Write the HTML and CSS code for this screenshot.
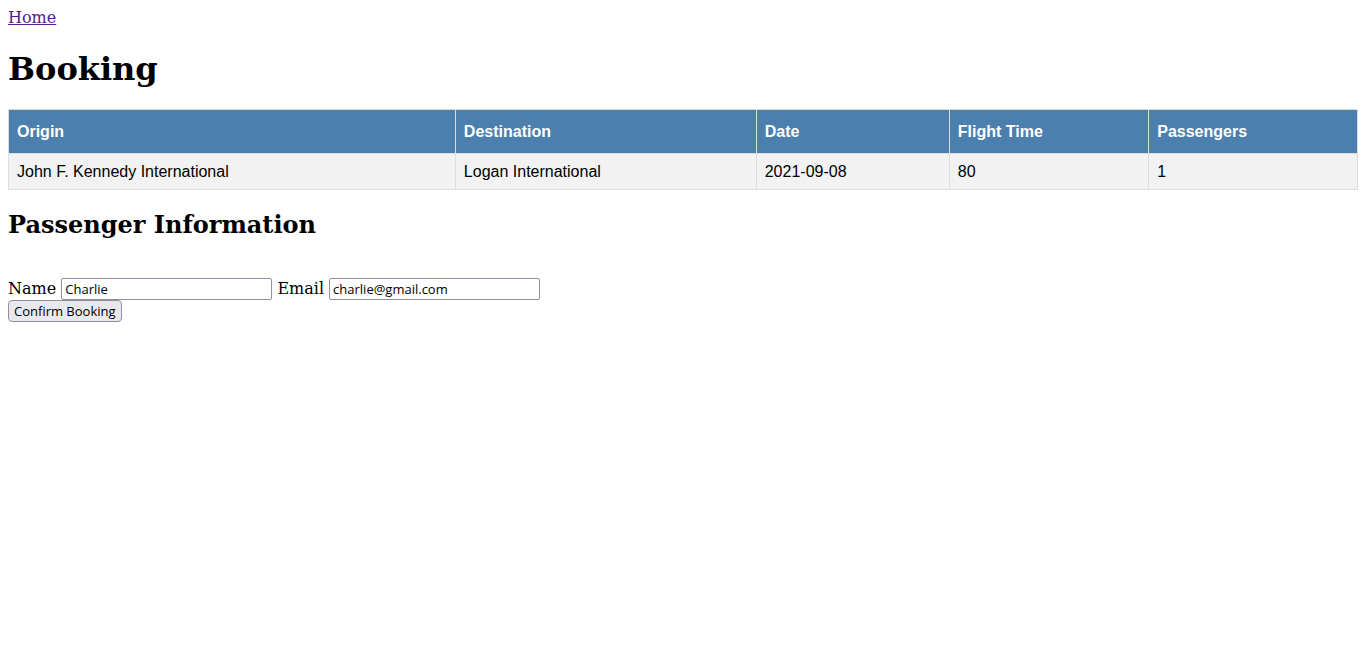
FILE: index.html
```html
<!DOCTYPE html>
<html>
<head>
<meta charset="utf-8">
<title>Booking</title>
<link rel="stylesheet" href="styles.css">
</head>
<body>
<a href="#">Home</a>
<h1>Booking</h1>
<table class="flights">
  <thead>
    <tr>
      <th>Origin</th>
      <th>Destination</th>
      <th>Date</th>
      <th>Flight Time</th>
      <th>Passengers</th>
    </tr>
  </thead>
  <tbody>
    <tr>
      <td>John F. Kennedy International</td>
      <td>Logan International</td>
      <td>2021-09-08</td>
      <td>80</td>
      <td>1</td>
    </tr>
  </tbody>
</table>
<h2>Passenger Information</h2>
<form class="passenger-form">
  <br>
  <label>Name</label> <input class="field" type="text" value="Charlie">
  <label>Email</label> <input class="field" type="text" value="charlie@gmail.com">
  <br>
  <button class="confirm" type="button">Confirm Booking</button>
</form>
</body>
</html>
```
FILE: styles.css
```css
body {
  font-family: "DejaVu Serif", serif;
}

a {
  color: #551a8b;
}

h1 {
  line-height: 38px;
  margin-top: 22.5px;
}

.flights {
  width: 100%;
  border-collapse: collapse;
  font-family: "Liberation Sans", Arial, sans-serif;
}

.flights th,
.flights td {
  border: 1px solid #ddd;
  padding: 8px;
  text-align: left;
  line-height: 19px;
}

.flights th {
  padding-top: 12px;
  padding-bottom: 12px;
  background-color: #4b7fae;
  color: #ffffff;
}

.flights tbody tr {
  background-color: #f2f2f2;
}

.field {
  box-sizing: border-box;
  width: 211px;
  height: 22px;
  padding: 0 3px;
  border: 1px solid #8f8f9d;
  border-radius: 2px;
  background: #ffffff;
  color: #000000;
  font-family: "Open Sans", "Noto Sans", sans-serif;
  font-size: 13px;
}

.confirm {
  box-sizing: border-box;
  height: 22px;
  padding: 0 5px;
  border: 1px solid #8f8f9d;
  border-radius: 4px;
  background: #e9e9ed;
  color: #000000;
  font-family: "Open Sans", "Noto Sans", sans-serif;
  font-size: 13px;
}
```
